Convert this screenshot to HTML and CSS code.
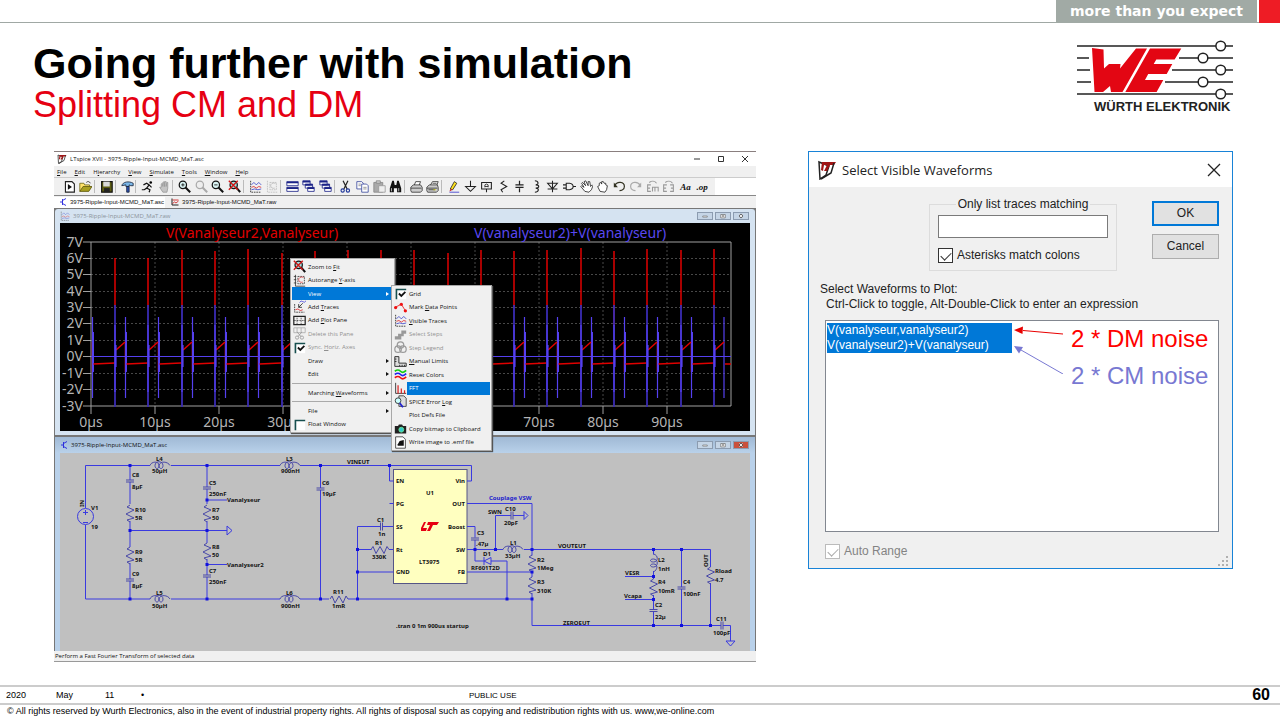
FILE: index.html
```html
<!DOCTYPE html>
<html lang="en">
<head>
<meta charset="utf-8">
<title>Going further with simulation</title>
<link rel="stylesheet" href="styles.css">
</head>
<body>
<svg class="sprite" aria-hidden="true">
  <symbol id="lt" viewBox="0 0 20 20"><path d="M2 2l10 4-3 9-6 4z" fill="#fff" stroke="#222" stroke-width="1.5"/><path d="M5 2h14l-2 3-4 0-3 6H7l3-6-3 0-1 6-2-1z" fill="#a01414"/><path d="M17 3l-3 10-10 6" fill="none" stroke="#222" stroke-width="1.5"/></symbol>
  <symbol id="run" viewBox="0 0 16 16"><path d="M3 2h8l3 3v10H3z" fill="#fff" stroke="#222" stroke-width="1.4"/><path d="M6 5l5 3.500-5 3.500z" fill="#111"/></symbol>
  <symbol id="open" viewBox="0 0 16 16"><path d="M1 14V4h5l1 2h6v2" fill="#ffe36b" stroke="#6b6412"/><path d="M1 14l4-6h11l-4 6z" fill="#a9a021" stroke="#5d570e"/><path d="M9 3c2-2 4-1 5 1" fill="none" stroke="#222"/></symbol>
  <symbol id="save" viewBox="0 0 16 16"><path d="M2 2h13v13H2z" fill="#5c5c12" stroke="#111" stroke-width="1.400"/><path d="M4 2h8v6H4z" fill="#d8d8d8"/><path d="M5 10h7v5H5z" fill="#222"/></symbol>
  <symbol id="hammer" viewBox="0 0 16 16"><path d="M1 7c1-5 9-6 14-3v3h-3l-2-1v2H6V6z" fill="#7bb7e8" stroke="#16233a"/><path d="M7 8h3v7H7z" fill="#2b4fb0" stroke="#16233a"/></symbol>
  <symbol id="runner" viewBox="0 0 16 16"><circle cx="12" cy="3" r="1.600"/><path d="M3 6l4-2 3 2-3 4 4 2-1 3M7 10l-3 2-3 0M10 6l3 3" fill="none" stroke="#111" stroke-width="1.500"/></symbol>
  <symbol id="stop" viewBox="0 0 16 16"><path d="M4 9V5l1-1 1 4V3l1-1 1 6V2l2 0v6l1-5h1l0 7-1 5H6L2 9z" fill="#c4c4c4" stroke="#999"/></symbol>
  <symbol id="zin" viewBox="0 0 16 16"><circle cx="6" cy="6" r="4.500" fill="#d9f3f3" stroke="#111" stroke-width="1.500"/><path d="M4 6h4M6 4v4" stroke="#111"/><path d="M9 9l6 6" stroke="#111" stroke-width="2.500"/></symbol>
  <symbol id="pan" viewBox="0 0 16 16"><circle cx="6" cy="6" r="4.500" fill="#eee" stroke="#aaa" stroke-width="1.500"/><path d="M9 9l6 6" stroke="#aaa" stroke-width="2.500"/></symbol>
  <symbol id="zout" viewBox="0 0 16 16"><circle cx="6" cy="6" r="4.500" fill="#d9f3f3" stroke="#111" stroke-width="1.500"/><path d="M4 6h4" stroke="#111"/><path d="M9 9l6 6" stroke="#111" stroke-width="2.500"/></symbol>
  <symbol id="fit" viewBox="0 0 16 16"><circle cx="7" cy="6" r="4.500" fill="#9fdede" stroke="#111" stroke-width="1.500"/><path d="M10 9l5 6" stroke="#111" stroke-width="2.500"/><path d="M1 1l11 11M12 1L1 12" stroke="#d31515" stroke-width="1.700"/></symbol>
  <symbol id="traces" viewBox="0 0 16 16"><path d="M2 1v14h13" fill="none" stroke="#222" stroke-dasharray="2 1"/><path d="M3 6l3-3 3 3 3-3 3 3" fill="none" stroke="#3944c9"/><path d="M3 9l3-1 3 2 3-2 3 1" fill="none" stroke="#d22"/><path d="M3 12l4-1 4 1 4-1" fill="none" stroke="#3944c9"/></symbol>
  <symbol id="auto" viewBox="0 0 16 16"><path d="M3 1v14h12M1 3h3M1 7h3M1 11h3" fill="none" stroke="#333"/><path d="M6 3h8v9H6z" fill="none" stroke="#333" stroke-dasharray="2 1"/><path d="M13 4c-4-1-6 1-6 3s2 4 5 3" fill="none" stroke="#d44"/></symbol>
  <symbol id="autog" viewBox="0 0 16 16"><path d="M3 1v14h12M6 3h8v9H6z" fill="none" stroke="#bbb" stroke-dasharray="2 1"/><path d="M13 4c-4-1-6 1-6 3s2 4 5 3" fill="none" stroke="#bbb"/></symbol>
  <symbol id="tile" viewBox="0 0 16 16"><path d="M1 2h14v5H1zM1 9h14v5H1z" fill="#fff" stroke="#1b2387"/><path d="M1 2h14v2H1zM1 9h14v2H1z" fill="#1b2387"/></symbol>
  <symbol id="casc" viewBox="0 0 16 16"><path d="M1 1h9v5H1zM4 5h9v5H4zM7 9h8v5H7z" fill="#fff" stroke="#1b2387"/><path d="M1 1h9v2H1zM4 5h9v2H4zM7 9h8v2H7z" fill="#1b2387"/></symbol>
  <symbol id="cut" viewBox="0 0 16 16"><path d="M5 1l5 10M11 1L6 11" stroke="#222" stroke-width="1.500"/><circle cx="4.500" cy="13" r="2" fill="none" stroke="#223a9c" stroke-width="1.400"/><circle cx="11" cy="13" r="2" fill="none" stroke="#223a9c" stroke-width="1.400"/></symbol>
  <symbol id="copy" viewBox="0 0 16 16"><path d="M1 2h6l2 2v7H1z" fill="#fff" stroke="#39479d"/><path d="M7 5h6l2 2v8H7z" fill="#fff" stroke="#39479d"/><path d="M3 5h3M3 7h3M9 9h4M9 11h4" stroke="#888"/></symbol>
  <symbol id="paste" viewBox="0 0 16 16"><path d="M1 3h11v12H1z" fill="#aaa" stroke="#888"/><path d="M4 1h5v3H4z" fill="#ccc" stroke="#888"/><path d="M7 7h8v8H7z" fill="#eee" stroke="#999"/></symbol>
  <symbol id="find" viewBox="0 0 16 16"><path d="M4 1h2l1 5h2l1-5h2l3 9v5h-5v-5H6v5H1v-5z" fill="#111"/><path d="M3 10v4M12 10v4" stroke="#ddd"/></symbol>
  <symbol id="print" viewBox="0 0 16 16"><path d="M5 7l2-5h6l-2 5" fill="#fff" stroke="#333"/><path d="M1 9l3-3h9l2 3v4l-2 2H2l-1-2z" fill="#ccc" stroke="#333"/><path d="M1 10h13" stroke="#333"/></symbol>
  <symbol id="pset" viewBox="0 0 16 16"><path d="M5 7l3-5h7l-2 5" fill="#fff" stroke="#333"/><path d="M1 9l3-3h10l1 3v4l-2 2H2l-1-2z" fill="#ccc" stroke="#333"/><path d="M1 10h13M3 12h8M8 4h5" stroke="#333"/><path d="M9 12h3" stroke="#cc0"/></symbol>
  <symbol id="pen" viewBox="0 0 16 16"><path d="M4 11l5-9 3 2-5 8z" fill="#ffe21b" stroke="#222"/><path d="M4 11l-1 3 4-2z" fill="#c22"/><path d="M3 15h12" stroke="#33c"/></symbol>
  <symbol id="gnd" viewBox="0 0 16 16"><path d="M8 1v7M2 8h12l-6 6z" fill="none" stroke="#222" stroke-width="1.300"/></symbol>
  <symbol id="net" viewBox="0 0 16 16"><path d="M2 3h12v8H2zM8 11v4" fill="none" stroke="#222" stroke-width="1.300"/><path d="M6 9V6l2-1 2 1v3M6 8h4" fill="none" stroke="#222"/></symbol>
  <symbol id="res" viewBox="0 0 16 16"><path d="M9 1L5 4l7 4-7 4 2 3" fill="none" stroke="#222" stroke-width="1.300"/></symbol>
  <symbol id="cap" viewBox="0 0 16 16"><path d="M8 1v5M8 10v5M3 6h10M3 9h10" fill="none" stroke="#222" stroke-width="1.500"/></symbol>
  <symbol id="ind" viewBox="0 0 16 16"><path d="M6 1c5 0 5 5 1 5 5 0 5 4 0 4 5 0 4 5-1 5" fill="none" stroke="#222" stroke-width="1.300"/></symbol>
  <symbol id="diode" viewBox="0 0 16 16"><path d="M8 1v14M2 4h12l-6 7zM2 11h12" fill="none" stroke="#222" stroke-width="1.300"/></symbol>
  <symbol id="comp" viewBox="0 0 16 16"><path d="M4 4h4c6 1 6 7 0 8H4zM0 6h4M0 10h4M12 8h4" fill="none" stroke="#222" stroke-width="1.300"/></symbol>
  <symbol id="move" viewBox="0 0 16 16"><path d="M6 14L1 8l1-1 3 2-3-5 1-1 4 4-2-5 2-1 3 6 0-5h2l1 6 2-2 1 1-2 5-3 3z" fill="#fff" stroke="#222"/></symbol>
  <symbol id="drag" viewBox="0 0 16 16"><path d="M5 14L2 8l2-1 0-3 2-1 1 2 0-3h2l1 2 2 0 0 2 2 1-1 5-2 3z" fill="#fff" stroke="#222"/></symbol>
  <symbol id="undo" viewBox="0 0 16 16"><path d="M2 7c3-6 12-5 12 1 0 4-4 5-6 5" fill="none" stroke="#332" stroke-width="1.500"/><path d="M1 3v6h5z" fill="#332"/></symbol>
  <symbol id="redo" viewBox="0 0 16 16"><path d="M14 7C11 1 2 2 2 8c0 4 4 5 6 5" fill="none" stroke="#aaa" stroke-width="1.500"/><path d="M15 3v6h-5z" fill="#aaa"/></symbol>
  <symbol id="rot" viewBox="0 0 16 16"><path d="M6 6H2v8h4M2 10h3M8 14V9h7v5M11 9v5M4 3c3-2 7-2 9 1" fill="none" stroke="#999" stroke-width="1.300"/></symbol>
  <symbol id="mir" viewBox="0 0 16 16"><path d="M6 6H2v8h4M2 10h3M10 6h4v8h-4M14 10h-3M4 3c3-2 7-2 9 1" fill="none" stroke="#999" stroke-width="1.300"/></symbol>
  <symbol id="addt" viewBox="0 0 16 16"><path d="M2 5v10h12" fill="none" stroke="#222" stroke-dasharray="2 1"/><path d="M8 3q2-3 4-1t4-1" fill="none" stroke="#44d"/><path d="M12 4l-5 5M7 5v4h4" fill="none" stroke="#222"/><path d="M3 12l3-1 3 2 3-1" fill="none" stroke="#d22"/></symbol>
  <symbol id="pane" viewBox="0 0 16 16"><path d="M1 3h14v10H1z" fill="none" stroke="#222" stroke-width="1.500"/><path d="M1 8h14M5 3v10M10 3v10" stroke="#222" stroke-dasharray="1 1"/></symbol>
  <symbol id="delp" viewBox="0 0 16 16"><path d="M1 1h14v6H1zM5 1v6M10 1v6" fill="none" stroke="#aaa"/><path d="M5 6l5 6M11 6l-5 6" stroke="#999"/><circle cx="5" cy="13" r="2" fill="none" stroke="#999"/><circle cx="11" cy="13" r="2" fill="none" stroke="#999"/></symbol>
  <symbol id="chk" viewBox="0 0 16 16"><path d="M3 3h12v12H3z" fill="#fff"/><path d="M3 15V3h12" fill="none" stroke="#174f4f" stroke-width="2"/><path d="M6 8l3 3 5-5" fill="none" stroke="#111" stroke-width="2.200"/></symbol>
  <symbol id="unchk" viewBox="0 0 16 16"><path d="M3 3h12v12H3z" fill="#fff"/><path d="M3 15V3h12" fill="none" stroke="#174f4f" stroke-width="2"/></symbol>
  <symbol id="marks" viewBox="0 0 16 16"><path d="M1 8l8-4 5 8" fill="none" stroke="#e11"/><circle cx="2" cy="8" r="2" fill="#e11"/><circle cx="9" cy="4" r="2" fill="#e11"/><circle cx="14" cy="12" r="2" fill="#e11"/></symbol>
  <symbol id="steps" viewBox="0 0 16 16"><path d="M1 14v-4h4V7h4V3h6v4h-3v3H9v4z" fill="#999"/></symbol>
  <symbol id="legend" viewBox="0 0 16 16"><g fill="none" stroke="#999" stroke-width="1.500"><circle cx="8" cy="5" r="4"/><circle cx="5" cy="10" r="4"/><circle cx="11" cy="10" r="4"/></g></symbol>
  <symbol id="limits" viewBox="0 0 16 16"><path d="M1 2h5v8h9v4H1zM1 5h2M1 8h2M7 14v-2M10 14v-2M13 14v-2" fill="#ddd" stroke="#333" stroke-width="1.200"/></symbol>
  <symbol id="colors" viewBox="0 0 16 16"><g fill="none" stroke-width="2"><path d="M1 4q4-3 7 0t7-1" stroke="#1c1"/><path d="M1 8q4-3 7 0t7-1" stroke="#22e"/><path d="M1 12q4-3 7 0t7-1" stroke="#e11"/></g></symbol>
  <symbol id="fft" viewBox="0 0 16 16"><path d="M2 1v13h13" fill="none" stroke="#222"/><path d="M5 14V4M9 14V8M13 14v-4" stroke="#d22" stroke-width="1.500"/></symbol>
  <symbol id="log" viewBox="0 0 16 16"><path d="M6 1h6l3 3v10H6z" fill="#ddd" stroke="#333"/><circle cx="5" cy="7" r="3.500" fill="#cff" stroke="#222"/><path d="M7 10l4 5" stroke="#22c" stroke-width="2.200"/></symbol>
  <symbol id="cam" viewBox="0 0 16 16"><path d="M1 5h4l1-2h4l1 2h4v9H1z" fill="#222"/><circle cx="9" cy="9.500" r="3" fill="#3cc" stroke="#7e9"/></symbol>
  <symbol id="emf" viewBox="0 0 16 16"><path d="M2 1h9l3 3v11H2z" fill="#fff" stroke="#333"/><path d="M4 11l3-5 5-1v7H5z" fill="#111"/></symbol>
  <symbol id="asc" viewBox="0 0 16 16"><path d="M2 8h5M7 2v12M14 1L7 5M7 11l7 4" fill="none" stroke="#22d" stroke-width="1.800"/></symbol>
  <symbol id="raw" viewBox="0 0 16 16"><path d="M2 1v13h13" fill="none" stroke="#222" stroke-width="2"/><path d="M3 4h12M3 11l4-3 3 2 5-4" fill="none" stroke="#c11" stroke-width="1.600"/></symbol>
  <symbol id="min" viewBox="0 0 16 8"><path d="M5 4h6v1.500H5z" fill="#fff" stroke="#555" stroke-width=".7"/></symbol>
  <symbol id="max" viewBox="0 0 16 8"><path d="M5 2h6v4.500H5zM7 3.500h2v1H7z" fill="#fff" stroke="#555" stroke-width=".8"/></symbol>
  <symbol id="x" viewBox="0 0 16 8"><path d="M6 2l4 4M10 2L6 6" stroke="#555" stroke-width="2.400"/><path d="M6 2l4 4M10 2L6 6" stroke="#fff" stroke-width="1.200"/></symbol>
</svg>

<div class="slide">
  <header class="strip">
    <span class="slogan">more than you expect</span>
    <span class="red"></span>
  </header>
  <div class="heading">
    <div>
      <h1>Going further with simulation</h1>
      <h2>Splitting CM and DM</h2>
    </div>
    <svg class="logo" viewBox="1076 40 158 76" role="img" aria-label="Würth Elektronik">
      <g fill="none" stroke="#222" stroke-width="1.600"><path d="M1077 46h156M1077 58h12M1179 58h54M1077 70h13M1172 70h61M1077 82h14M1165 82h68M1077 94h156"/></g>
      <g fill="#fff" stroke="#222" stroke-width="1.500"><circle cx="1220.700" cy="46" r="4.800"/><circle cx="1203" cy="58" r="4.800"/><circle cx="1220.700" cy="70" r="4.800"/><circle cx="1203" cy="82" r="4.800"/><circle cx="1220.700" cy="94" r="4.800"/></g>
      <path fill="#e30613" d="M1092 48l11.500 1.500.500 19 5-4.500h11.500l-.500 4.500L1136 48.500h11L1122.500 92H1111l-1-6-7 6h-8.500zM1150 48.500h31.300l-6.700 11h-18.300l-2.600 4.500h18.600l-5.600 10h-18.500l-3.200 6h18.300l-6.700 12h-31.300z"/>
      <text class="brand" x="1094" y="111">WÜRTH ELEKTRONIK</text>
    </svg>
  </div>

  <main class="stage">
    <section class="app">
      <div class="app-title"><svg class="ic10"><use href="#lt"/></svg><span>LTspice XVII - 3975-Ripple-Input-MCMD_MaT.asc</span>
        <span class="caps"><button aria-label="Minimize"><svg viewBox="0 0 10 10"><path d="M2 5h6"/></svg></button><button aria-label="Maximize"><svg viewBox="0 0 10 10"><path d="M2.500 2.500h5v5h-5z"/></svg></button><button aria-label="Close"><svg viewBox="0 0 10 10"><path d="M2 2l6 6M8 2L2 8"/></svg></button></span></div>
      <nav class="menubar"><button><u>F</u>ile</button><button><u>E</u>dit</button><button>H<u>i</u>erarchy</button><button><u>V</u>iew</button><button><u>S</u>imulate</button><button><u>T</u>ools</button><button><u>W</u>indow</button><button><u>H</u>elp</button></nav>
      <div class="toolbar"><div class="tools">
        <button aria-label="Run"><svg><use href="#run"/></svg></button><button aria-label="Open"><svg><use href="#open"/></svg></button><i></i>
        <button aria-label="Save"><svg><use href="#save"/></svg></button><i></i>
        <button aria-label="Control panel"><svg><use href="#hammer"/></svg></button><i></i>
        <button aria-label="Simulate"><svg><use href="#runner"/></svg></button><button aria-label="Halt"><svg><use href="#stop"/></svg></button><i></i>
        <button aria-label="Zoom in"><svg><use href="#zin"/></svg></button><button aria-label="Pan"><svg><use href="#pan"/></svg></button><button aria-label="Zoom out"><svg><use href="#zout"/></svg></button><button aria-label="Zoom to fit"><svg><use href="#fit"/></svg></button><i></i>
        <button aria-label="Traces"><svg><use href="#traces"/></svg></button><button aria-label="Autorange"><svg><use href="#autog"/></svg></button><i></i>
        <button aria-label="Tile"><svg><use href="#tile"/></svg></button><button aria-label="Cascade"><svg><use href="#casc"/></svg></button><button aria-label="Close all"><svg><use href="#casc"/></svg></button><i></i>
        <button aria-label="Cut"><svg><use href="#cut"/></svg></button><button aria-label="Copy"><svg><use href="#copy"/></svg></button><button aria-label="Paste"><svg><use href="#paste"/></svg></button><button aria-label="Find"><svg><use href="#find"/></svg></button><i></i>
        <button aria-label="Print"><svg><use href="#print"/></svg></button><button aria-label="Print setup"><svg><use href="#pset"/></svg></button><i></i>
        <button aria-label="Wire"><svg><use href="#pen"/></svg></button><button aria-label="Ground"><svg><use href="#gnd"/></svg></button><button aria-label="Label net"><svg><use href="#net"/></svg></button><button aria-label="Resistor"><svg><use href="#res"/></svg></button><button aria-label="Capacitor"><svg><use href="#cap"/></svg></button><button aria-label="Inductor"><svg><use href="#ind"/></svg></button><button aria-label="Diode"><svg><use href="#diode"/></svg></button><button aria-label="Component"><svg><use href="#comp"/></svg></button><button aria-label="Move"><svg><use href="#move"/></svg></button><button aria-label="Drag"><svg><use href="#drag"/></svg></button><button aria-label="Undo"><svg><use href="#undo"/></svg></button><button aria-label="Redo"><svg><use href="#redo"/></svg></button><button aria-label="Rotate"><svg><use href="#rot"/></svg></button><button aria-label="Mirror"><svg><use href="#mir"/></svg></button><button class="txt">Aa</button><button class="txt">.op</button>
      </div><div class="blank"></div></div>
      <div class="tabs"><button class="on"><svg class="ic8"><use href="#asc"/></svg>3975-Ripple-Input-MCMD_MaT.asc</button><button><svg class="ic8"><use href="#raw"/></svg>3975-Ripple-Input-MCMD_MaT.raw</button></div>

      <div class="mdi">
        <section class="child inactive">
          <div class="bar"><svg class="ic10"><use href="#traces"/></svg><span>3975-Ripple-Input-MCMD_MaT.raw</span><span class="ctl"><button aria-label="Minimize"><svg><use href="#min"/></svg></button><button aria-label="Maximize"><svg><use href="#max"/></svg></button><button aria-label="Close"><svg><use href="#x"/></svg></button></span></div>
          <svg class="plot" viewBox="60 223 690 208">
            <defs>
              <g id="fall"><path class="r" d="M10.500 342v30"/><path class="b" d="M10.500 317v81"/><path class="b wide" d="M11 332v40"/><path class="r" d="M11.500 364L33 363"/></g>
              <g id="rise"><path class="r" d="M1 350l9-8"/><path class="bd" d="M0 305v102"/><path class="b" d="M0 325v67M1 345v22"/></g>
            </defs>
            <rect x="60" y="223" width="690" height="208" fill="#000"/>
            <path d="M91 258.500h640M91 274.500h640M91 291.500h640M91 307.500h640M91 323.500h640M91 340.500h640M91 373.500h640M91 389.500h640M155 242v164M219 242v164M283 242v164M347 242v164M411 242v164M475 242v164M539 242v164M603 242v164M667 242v164" fill="none" stroke="#484848" stroke-dasharray="2 2"/>
            <path class="axis" d="M91 242h640v164H91zM83 242h8M83 258.500h8M83 274.500h8M83 291.500h8M83 307.500h8M83 323.500h8M83 340.500h8M83 356.500h8M83 373.500h8M83 389.500h8M83 406h8M91 406v8M155 406v8M219 406v8M283 406v8M347 406v8M411 406v8M475 406v8M539 406v8M603 406v8M667 406v8"/>
            <path class="r" d="M115 258v50M148 258v50M182 250v58M215 251v57M248 249v59M282 253v55M315 251v57M348 250v58M381 250v58M414 250v58M448 253v55M481 250v58M514 251v57M547 250v58M581 248v60M614 251v75M647 249v59M681 250v58M714 249v59"/>
            <use href="#fall" x="82"/>
            <g><use href="#fall" x="115"/><use href="#fall" x="148"/><use href="#fall" x="182"/><use href="#fall" x="215"/><use href="#fall" x="248"/><use href="#fall" x="282"/><use href="#fall" x="315"/><use href="#fall" x="348"/><use href="#fall" x="381"/><use href="#fall" x="414"/><use href="#fall" x="448"/><use href="#fall" x="481"/><use href="#fall" x="514"/><use href="#fall" x="547"/><use href="#fall" x="581"/><use href="#fall" x="614"/><use href="#fall" x="647"/><use href="#fall" x="681"/></g>
            <path class="r" d="M725 364h6"/><path class="b" d="M724 317v81"/>
            <g><use href="#rise" x="115"/><use href="#rise" x="148"/><use href="#rise" x="182"/><use href="#rise" x="215"/><use href="#rise" x="248"/><use href="#rise" x="282"/><use href="#rise" x="315"/><use href="#rise" x="348"/><use href="#rise" x="381"/><use href="#rise" x="414"/><use href="#rise" x="448"/><use href="#rise" x="481"/><use href="#rise" x="514"/><use href="#rise" x="547"/><use href="#rise" x="581"/><use href="#rise" x="614"/><use href="#rise" x="647"/><use href="#rise" x="681"/><use href="#rise" x="714"/></g>
            <path class="b" d="M91 356.500h640"/>
            <g class="ptext">
              <text x="166" y="238" fill="#e00000">V(Vanalyseur2,Vanalyseur)</text><text x="474" y="238" fill="#5a48f0">V(vanalyseur2)+V(vanalyseur)</text>
              <g fill="#b4b4b4" text-anchor="end"><text x="83" y="247">7V</text><text x="83" y="263">6V</text><text x="83" y="279">5V</text><text x="83" y="296">4V</text><text x="83" y="312">3V</text><text x="83" y="328">2V</text><text x="83" y="345">1V</text><text x="83" y="361">0V</text><text x="83" y="378">-1V</text><text x="83" y="394">-2V</text><text x="83" y="411">-3V</text></g>
              <g fill="#b4b4b4" text-anchor="middle"><text x="91" y="427">0µs</text><text x="155" y="427">10µs</text><text x="219" y="427">20µs</text><text x="283" y="427">30µs</text><text x="539" y="427">70µs</text><text x="603" y="427">80µs</text><text x="667" y="427">90µs</text></g>
            </g>
          </svg>
        </section>

        <section class="child active">
          <div class="bar"><svg class="ic8"><use href="#asc"/></svg><span>3975-Ripple-Input-MCMD_MaT.asc</span><span class="ctl"><button aria-label="Minimize"><svg><use href="#min"/></svg></button><button aria-label="Maximize"><svg><use href="#max"/></svg></button><button class="close" aria-label="Close"><svg><use href="#x"/></svg></button></span></div>
          <svg class="plot" viewBox="60 453 690 198">
            <defs>
              <path id="rv" class="part" d="M0-8l-3 2 7 3-8 4 8 4-7 2 3 2"/>
              <path id="rh" class="part" d="M-9 0l2-3 3 7 4-7 4 7 3-7 2 3"/>
              <path id="cv" class="part" d="M-4-1h8M-4 1h8"/>
              <path id="ch" class="part" d="M-1-4v8M1-4v8"/>
              <path id="lh" class="part" d="M-10 0c1-4 9-5 9 0 0 4-4 4-4 0 0-5 8-5 8 0 0 4-4 4-4 0 1-5 9-4 11 0"/>
            </defs>
            <rect x="60" y="453" width="690" height="198" fill="#c0c0c0"/>
            <rect x="393.500" y="469.500" width="73.500" height="114" fill="#ffffc0" stroke="#555585"/>
            <g class="wire">
              <path d="M85.500 508V465.500H150M171 465.500h109M300 465.500H471.500V481H467M389.500 465.500V481h4M85.500 525v74H150M171 599h109M300 599h29M348 599h184"/>
              <path d="M130 465.500V480M130 482v22M130 521v26M130 563v16M130 581v18M130 530.500h97M207 465.500V487M207 489v15M207 521v22M207 559v16M207 577v22M207 500h20M207 564.500h20M320.500 465.500V488M320.500 490v109"/>
              <path d="M389.500 503.500h4M393 526.500h-10.500M380 526.500h-22.500V599M357.500 549.500h14M389 549.500h4M357.500 572h36M467 503.500h65v52M467 526.500h8v11M475 540v21h9M491 561h16v38M467 549.500h36M524 549.500h186.500V567M495.500 549.500v-34H511M513 515.500h11M467 572h65M532 571v6M532 593v32.500h189M723 625.500h7.500V641"/>
              <path d="M653.500 549.500v5M653.500 571v8M653.500 595v14.500M653.500 611.500v14M625 576.500h28M625 599.500h28M681.500 549.500V587M681.500 589v36M710.500 583v42"/>
              <path d="M227 526v9l5-4.500zM524 511.500v8l4-4zM726 641h9l-4.500 5zM491 557.500v7l-7-3.500zM484 557v8"/>
              <circle cx="85.500" cy="516.500" r="8"/><path d="M83 512.500h5M85.500 510v5M83 522.500h5"/>
            </g>
            <use href="#rv" x="130" y="513"/><use href="#rv" x="130" y="555"/><use href="#rv" x="207" y="513"/><use href="#rv" x="207" y="551"/><use href="#rv" x="532" y="563"/><use href="#rv" x="532" y="585"/><use href="#rv" x="653.500" y="587"/><use href="#rv" x="710.500" y="575"/>
            <use href="#rh" x="339" y="599"/><use href="#rh" x="380" y="549.500"/>
            <use href="#cv" x="130" y="481"/><use href="#cv" x="130" y="580"/><use href="#cv" x="207" y="488"/><use href="#cv" x="207" y="576"/><use href="#cv" x="320.500" y="489"/><use href="#cv" x="475" y="539"/><use href="#cv" x="653.500" y="610.500"/><use href="#cv" x="681.500" y="588"/>
            <use href="#ch" x="381.500" y="526.500"/><use href="#ch" x="512" y="515.500"/><use href="#ch" x="722" y="625.500"/>
            <use href="#lh" x="160" y="465.500"/><use href="#lh" x="290" y="465.500"/><use href="#lh" x="160" y="599"/><use href="#lh" x="290" y="599"/><use href="#lh" x="513" y="549.500"/>
            <path class="part" d="M653.500 554c5 1 5 8 0 8-4 0-4-3 0-3 5 0 5 8 0 8-4 0-4-3 0-3 5 0 4 6 0 8"/>
            <path fill="#11d" d="M128.500 464h3v3h-3zM205.500 464h3v3h-3zM319 464h3v3h-3zM388 464h3v3h-3zM205.500 498.500h3v3h-3zM128.500 529h3v3h-3zM205.500 529h3v3h-3zM205.500 563h3v3h-3zM128.500 597.500h3v3h-3zM205.500 597.500h3v3h-3zM319 597.500h3v3h-3zM356 597.500h3v3h-3zM356 548h3v3h-3zM356 570.500h3v3h-3zM473.500 548h3v3h-3zM494 548h3v3h-3zM530.500 548h3v3h-3zM530.500 570.500h3v3h-3zM530.500 597.500h3v3h-3zM505.500 597.500h3v3h-3zM652 548h3v3h-3zM680 548h3v3h-3zM652 575h3v3h-3zM652 598h3v3h-3zM652 624h3v3h-3zM680 624h3v3h-3zM709 624h3v3h-3z"/>
            <path fill="#e60012" d="M428 522h11l-2 3h-4l-3 6h-3l3-6h-3zM426 522l-3 6h4l-1 3h-4l1-2-1 2h-1l0-3 3-6z"/>
            <g class="stext">
              <text x="156" y="461">L4</text><text x="152" y="473">50µH</text><text x="286" y="461">L3</text><text x="281" y="473">900nH</text><text x="347" y="464">VINEUT</text>
              <text x="132" y="477">C8</text><text x="132" y="489">8µF</text><text x="209" y="485">C5</text><text x="209" y="496">250nF</text><text x="227" y="502">Vanalyseur</text>
              <text x="91" y="510">V1</text><text x="91" y="529">19</text><text transform="translate(84 507) rotate(-90)">IN</text><text x="135" y="512">R10</text><text x="135" y="520">5R</text><text x="212" y="512">R7</text><text x="212" y="520">50</text>
              <text x="135" y="554">R9</text><text x="135" y="562">5R</text><text x="212" y="549">R8</text><text x="212" y="557">50</text><text x="227" y="567">Vanalyseur2</text><text x="132" y="576">C9</text><text x="132" y="588">8µF</text><text x="209" y="573">C7</text><text x="209" y="584">250nF</text>
              <text x="156" y="595">L5</text><text x="152" y="608">50µH</text><text x="286" y="595">L6</text><text x="281" y="608">900nH</text><text x="322" y="485">C6</text><text x="322" y="496">19µF</text><text x="333" y="594">R11</text><text x="332" y="608">1mR</text>
              <text x="396" y="483">EN</text><text x="396" y="506">PG</text><text x="396" y="529">SS</text><text x="396" y="552">Rt</text><text x="396" y="574">GND</text><text x="426" y="495">U1</text><text x="419" y="564">LT3975</text>
              <g text-anchor="end"><text x="465" y="483">Vin</text><text x="465" y="506">OUT</text><text x="465" y="529">Boost</text><text x="465" y="552">SW</text><text x="465" y="574">FB</text></g>
              <text x="377" y="522">C1</text><text x="378" y="536">1n</text><text x="375" y="545">R1</text><text x="372" y="559">330K</text>
              <text x="489" y="500" fill="#2222cc">Couplage VSW</text><text x="488" y="514">SWN</text><text x="505" y="511">C10</text><text x="504" y="525">20pF</text><text x="477" y="535">C3</text><text x="476" y="546">.47µ</text><text x="510" y="545">L1</text><text x="505" y="558">33µH</text><text x="483" y="556">D1</text><text x="471" y="570">RF601T2D</text><text x="537" y="562">R2</text><text x="537" y="570">1Meg</text><text x="537" y="584">R3</text><text x="537" y="593">310K</text>
              <text x="396" y="628">.tran 0 1m 900us startup</text><text x="558" y="548">VOUTEUT</text><text x="563" y="625">ZEROEUT</text>
              <text x="658" y="562">L2</text><text x="658" y="571">1nH</text><text x="625" y="575">VESR</text><text x="624" y="598">Vcapa</text><text x="658" y="584">R4</text><text x="658" y="593">10mR</text><text x="655" y="607">C2</text><text x="655" y="619">22µ</text><text x="683" y="584">C4</text><text x="683" y="596">100nF</text><text x="715" y="573">Rload</text><text x="715" y="582">4.7</text><text transform="translate(708 567) rotate(-90)">OUT</text><text x="716" y="621">C11</text><text x="713" y="635">100pF</text>
            </g>
          </svg>
        </section>

        <div class="menu first" role="menu">
          <button><svg><use href="#fit"/></svg><span>Zoom to <u>F</u>it</span></button>
          <button><svg><use href="#auto"/></svg><span>Autorange <u>Y</u>-axis</span></button>
          <button class="hot"><svg></svg><span>View</span><b></b></button>
          <button><svg><use href="#addt"/></svg><span>Add <u>T</u>races</span></button>
          <button><svg><use href="#pane"/></svg><span>Add <u>P</u>lot Pane</span></button>
          <button disabled><svg><use href="#delp"/></svg><span>Delete this Pane</span></button>
          <button disabled><svg><use href="#chk"/></svg><span>Sync. <u>H</u>oriz. Axes</span></button>
          <button><svg></svg><span>Draw</span><b></b></button>
          <button><svg></svg><span>Edit</span><b></b></button>
          <hr>
          <button><svg></svg><span>Marching <u>W</u>aveforms</span><b></b></button>
          <hr>
          <button><svg></svg><span>File</span><b></b></button>
          <button><svg><use href="#unchk"/></svg><span>Float Window</span></button>
        </div>
        <div class="menu second" role="menu">
          <button><svg><use href="#chk"/></svg><span>Grid</span></button>
          <button><svg><use href="#marks"/></svg><span>Mark <u>D</u>ata Points</span></button>
          <button><svg><use href="#traces"/></svg><span><u>V</u>isible Traces</span></button>
          <button disabled><svg><use href="#steps"/></svg><span>Select Steps</span></button>
          <button disabled><svg><use href="#legend"/></svg><span>Step Legend</span></button>
          <button><svg><use href="#limits"/></svg><span><u>M</u>anual Limits</span></button>
          <button><svg><use href="#colors"/></svg><span>Reset Colors</span></button>
          <button class="pick"><svg><use href="#fft"/></svg><span>FFT</span></button>
          <button><svg><use href="#log"/></svg><span>SPICE Error <u>L</u>og</span></button>
          <button><svg></svg><span>Plot Defs File</span></button>
          <button><svg><use href="#cam"/></svg><span>Copy bitmap to Clipboard</span></button>
          <button><svg><use href="#emf"/></svg><span>Write image to .emf file</span></button>
        </div>
      </div>
      <div class="status">Perform a Fast Fourier Transform of selected data</div>
    </section>

    <section class="dialog">
      <div class="dlg-title"><svg><use href="#lt"/></svg><span>Select Visible Waveforms</span><button aria-label="Close"><svg viewBox="0 0 14 14"><path d="M1 1l12 12M13 1L1 13" stroke="#222" stroke-width="1.300"/></svg></button></div>
      <form class="dlg-body">
        <div class="top">
          <fieldset><legend><label for="match">Only list traces matching</label></legend><input id="match" type="text"><label class="check"><input type="checkbox" checked><span>Asterisks match colons</span></label></fieldset>
          <div class="btns"><button type="button" class="ok">OK</button><button type="button">Cancel</button></div>
        </div>
        <label class="hint" for="waves">Select Waveforms to Plot:<br><span>Ctrl-Click to toggle, Alt-Double-Click to enter an expression</span></label>
        <select id="waves" multiple size="2"><option selected>V(vanalyseur,vanalyseur2)</option><option selected>V(vanalyseur2)+V(vanalyseur)</option></select>
        <label class="check off"><input type="checkbox" checked disabled><span>Auto Range</span></label>
      </form>
      <svg class="grip" viewBox="0 0 10 10" fill="#b0b0b0"><path d="M8 0h2v2H8zM8 4h2v2H8zM8 8h2v2H8zM4 4h2v2H4zM4 8h2v2H4zM0 8h2v2H0z"/></svg>
      <div class="notes">
        <svg viewBox="0 -4 50 54"><path d="M50 10L10 6.500" stroke="#e80000"/><path d="M1 6l9-3.500-.5 7.500z" fill="#e80000"/><path d="M50 50L8 26" stroke="#7878d2"/><path d="M1 22l9 1-4 6.500z" fill="#7878d2"/></svg>
        <p class="dm">2 * DM noise</p><p class="cm">2 * CM noise</p>
      </div>
    </section>
  </main>

  <footer>
    <div class="meta"><span>2020</span><span>May</span><span>11</span><span>•</span><span class="use">PUBLIC USE</span><strong>60</strong></div>
    <div class="rights">© All rights reserved by Wurth Electronics, also in the event of industrial property rights. All rights of disposal such as copying and redistribution rights with us. www,we-online.com</div>
  </footer>
</div>
</body>
</html>
```
FILE: styles.css
```css
* { box-sizing: border-box; }
body { margin: 0; background: #fff; color: #000; font-family: "Liberation Sans", Arial, sans-serif; }
button { appearance: none; border: 0; margin: 0; padding: 0; background: none; font: inherit; color: inherit; }
svg { display: block; flex: none; }
.sprite { position: absolute; width: 0; height: 0; }
.slide { min-height: 100vh; display: flex; flex-direction: column; }

.strip { height: 23px; display: flex; justify-content: flex-end; border-bottom: 1px solid #a0a8a4; }
.strip span { height: 23px; }
.slogan { background: #a1aaa5; color: #fff; font: bold 14px/22px "DejaVu Sans", sans-serif; padding: 0 14px; margin-right: 2px; }
.red { width: 21px; background: #ee1c25; }

.heading { height: 128px; display: flex; justify-content: space-between; padding: 17px 46px 0 33px; }
h1 { margin: 0; font-size: 43px; line-height: 46px; }
h2 { margin: 0; font-size: 36px; line-height: 38px; font-weight: normal; color: #e60012; }
.logo { width: 158px; height: 76px; }
.brand { font: bold 13px "Liberation Sans", sans-serif; fill: #222; }

.stage { flex: 1; display: grid; grid-template-columns: 702fr 425fr; gap: 52px; padding: 0 47px 0 54px; align-items: start; }

.app { border-top: 1px solid #8a7f7f; border-bottom: 1px solid #999; background: #f0f0f0; font: 6px/10px "Open Sans", sans-serif; color: #111; }
.ic10 { width: 10px; height: 10px; }
.ic8 { width: 8px; height: 8px; }
.app-title { height: 14px; display: flex; align-items: center; gap: 3px; padding: 0 6px 0 3px; background: #fff; }
.caps { margin-left: auto; display: flex; gap: 14px; }
.caps svg { width: 10px; height: 10px; fill: none; stroke: #333; }
.menubar { height: 11px; display: flex; align-items: center; gap: 8px; padding-left: 3px; }
.toolbar { height: 19px; display: flex; border-top: 1px solid #ccc; border-bottom: 1px solid #888; }
.tools { flex: 660; display: flex; align-items: center; padding: 0 4px 0 7px; }
.tools button { flex: 1; display: flex; justify-content: center; }
.tools svg { width: 13px; height: 13px; }
.tools i { width: 4px; height: 13px; border-left: 1px solid #bbb; }
.tools .txt { font: italic bold 9px/12px "Liberation Serif", serif; }
.blank { flex: 42; background: #fff; }
.tabs { height: 12px; display: flex; align-items: center; gap: 1px; }
.tabs button { height: 11px; display: flex; align-items: center; gap: 3px; padding: 0 1px 0 5px; font: 6px/10px "Liberation Sans", sans-serif; background: #f0f0f0; }
.tabs .on { background: #fff; }

.mdi { position: relative; background: #777; padding: 1px 1px 0; }
.child { background: #d5e3f1; padding: 0 5px 4px; border-radius: 3px 3px 0 0; }
.bar { height: 14px; display: flex; align-items: center; gap: 3px; }
.inactive .bar { color: #8b939b; }
.inactive .bar > svg { opacity: .6; }
.active { margin-top: 2px; padding-bottom: 0; background: #b9d1ea; }
.active .bar { height: 16px; margin: 0 -5px; padding: 0 5px; background: linear-gradient(#a0b9d5, #b9d1ea); }
.ctl { margin-left: auto; display: flex; gap: 2px; padding-right: 1px; }
.ctl button { width: 16px; height: 8px; border: 1px solid #8c9cb0; background: #c5d5e6; }
.ctl svg { width: 14px; height: 6px; }
.ctl .close { background: #c9503c; }
.plot { width: 100%; height: auto; }
.r { fill: none; stroke: #e00000; stroke-width: 1.500; }
.b { fill: none; stroke: #5540f0; stroke-width: 1.200; }
.bd { fill: none; stroke: #3a2cb4; stroke-width: 1.800; }
.wide { stroke-width: 2; }
.axis { fill: none; stroke: #a0a0a0; }
.ptext { font: 14px "Noto Sans", sans-serif; }
.wire { fill: none; stroke: #3a3ae0; }
.part { fill: none; stroke: #4848a8; }
.stext { font: bold 6px "Noto Sans", sans-serif; fill: #111; }
.status { height: 10px; padding-left: 1px; }

.menu { position: absolute; display: flex; flex-direction: column; background: #f0f0f0; border: 1px solid #a8a8a8; box-shadow: 1px 1px 1px #555; font-size: 6px; }
.menu button { flex: 1; display: flex; align-items: center; gap: 2px; padding-left: 1px; text-align: left; white-space: nowrap; }
.menu svg { width: 13px; height: 13px; }
.menu span { flex: 1; }
.menu button:disabled { color: #909090; }
.menu b { border: 2px solid transparent; border-left: 3px solid currentColor; border-right: 0; margin-right: 3px; }
.menu hr { width: 100%; height: 1px; margin: 2px 0; border: 0; background: #aaa; }
.first { left: 236px; top: 50px; width: 105px; height: 175px; padding: 1px 2px 1px 1px; }
.second { left: 337px; top: 77px; width: 101px; height: 166px; padding: 1px; }
.menu .hot { background: #0078d7; color: #fff; }
.pick span { align-self: stretch; display: flex; align-items: center; background: #0078d7; color: #fff; margin-left: -2px; padding-left: 2px; }

.dialog { position: relative; border: 1px solid #1883d7; background: #f0f0f0; font-size: 12px; line-height: 15px; color: #222; }
.dlg-title { height: 35px; display: flex; align-items: center; gap: 5px; padding: 0 11px 0 8px; background: #fff; font: 13px/18px "Open Sans", sans-serif; }
.dlg-title > svg { width: 20px; height: 20px; }
.dlg-title button { margin-left: auto; }
.dlg-title button svg { width: 14px; height: 14px; }
.dlg-body { padding: 10px 13px 9px 16px; }
.top { display: flex; justify-content: flex-end; gap: 35px; }
fieldset { width: 188px; height: 74px; margin: 0; padding: 3px 8px 0; border: 1px solid #dcdcdc; min-width: 0; }
legend { margin: 0 auto; padding: 0 2px; }
fieldset input[type=text] { display: block; width: 100%; height: 23px; border: 1px solid #7a7a7a; background: #fff; margin-bottom: 10px; }
.check { display: flex; align-items: center; gap: 4px; }
.check input { appearance: none; width: 15px; height: 15px; margin: 0; border: 1px solid #333; background: #fff; display: grid; place-items: center; }
.check input::before { content: ""; width: 9px; height: 5px; border-left: 1px solid #333; border-bottom: 1px solid #333; transform: translateY(-1px) rotate(-45deg); }
.btns { display: flex; flex-direction: column; gap: 8px; padding-top: 4px; }
.btns button { width: 67px; height: 25px; border: 1px solid #adadad; background: #e1e1e1; }
.btns .ok { border: 2px solid #0078d7; }
.hint { display: block; margin: 11px 0 8px -5px; }
.hint span { margin-left: 6px; }
select { appearance: none; display: block; width: 100%; height: 212px; border: 1px solid #828790; border-radius: 0; background: #fff; padding: 2px 1px; margin: 0; font: inherit; overflow: hidden; outline: 0; }
option { width: 185px; height: 15px; min-height: 0; padding: 0; line-height: 15px; }
option:checked { background: #0078d7 linear-gradient(#0078d7, #0078d7); color: #fff; }
.off { margin-top: 12px; color: #838383; }
.off input { border-color: #bbb; }
.off input::before { border-color: #aaa; }
.grip { position: absolute; right: 4px; bottom: 2px; width: 10px; height: 10px; }
.notes { position: absolute; left: 204px; top: 168px; display: grid; grid-template-columns: 50px auto; column-gap: 8px; font-size: 24px; line-height: 37px; white-space: nowrap; }
.notes svg { grid-row: 1 / 3; width: 50px; height: 54px; }
.notes p { margin: 0; }
.dm { color: #f00; }
.cm { color: #7878d2; }

footer { border-top: 2px solid #ccc; }
.meta { height: 18px; display: flex; align-items: center; padding: 0 10px 0 6px; font-size: 9px; border-bottom: 2px solid #ccc; }
.meta span { width: 49px; }
.meta span:nth-child(1) { width: 50px; }
.meta span:nth-child(3) { width: 36px; }
.meta .use { width: auto; font-size: 8px; margin-left: 279px; }
.meta strong { margin-left: auto; font-size: 16px; line-height: 16px; }
.rights { height: 15px; padding-left: 7px; font-size: 9px; line-height: 13px; }
```
